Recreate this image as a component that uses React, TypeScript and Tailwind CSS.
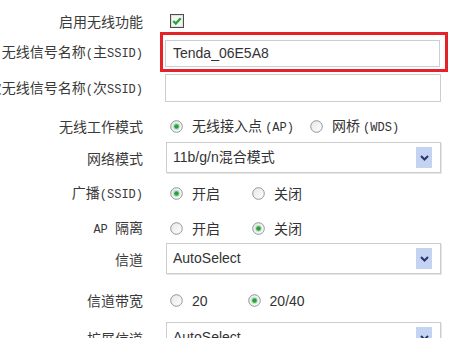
import React from "react";

const CJK = { fontFamily: '"Noto Sans CJK SC", "Liberation Sans", sans-serif' };
const SANS = { fontFamily: '"Liberation Sans", "Noto Sans CJK SC", sans-serif' };
const MONO = { fontFamily: '"Liberation Mono", monospace' };

function M({ children }: { children: React.ReactNode }) {
  return (
    <span className="text-[12px]" style={MONO}>
      {children}
    </span>
  );
}

function Label({ children }: { children: React.ReactNode }) {
  return (
    <div
      className="w-[143px] shrink-0 flex justify-end whitespace-nowrap text-[14px] leading-none text-[#3a3a3a]"
      style={CJK}
    >
      <span className="whitespace-pre">{children}</span>
    </div>
  );
}

function Radio({ on }: { on?: boolean }) {
  return (
    <svg width="13" height="13" viewBox="0 0 13 13" className="shrink-0">
      <defs>
        <linearGradient id="rg" x1="0" y1="0" x2="1" y2="1">
          <stop offset="0" stopColor="#e6e6e6" />
          <stop offset="1" stopColor="#ffffff" />
        </linearGradient>
      </defs>
      <circle cx="6.5" cy="6.5" r="5.8" fill="url(#rg)" stroke="#8f969c" strokeWidth="1" />
      {on && <circle cx="6.5" cy="6.5" r="3.4" fill="#b9e3bf" />}
      {on && <circle cx="6.5" cy="6.5" r="2.3" fill="#2c9e3e" />}
    </svg>
  );
}

function Opt({ on, children, className }: { on?: boolean; children: React.ReactNode; className?: string }) {
  return (
    <div className={"flex items-center " + (className || "")}>
      <Radio on={on} />
      <span className="ml-[9px] text-[14px] leading-none text-[#333] whitespace-pre" style={CJK}>
        {children}
      </span>
    </div>
  );
}

function Select({ value }: { value: string }) {
  return (
    <div className="ml-[23px] w-[275px] h-[31px] border border-[#cdcdcd] shadow-[1px_1px_0_#e6e6e6] bg-white flex items-center pl-[6px] pr-[8px]">
      <span className="flex-1 text-[14px] text-[#333] whitespace-nowrap" style={SANS}>
        {value}
      </span>
      <div className="w-[16px] h-[21px] bg-[#c4d3f2] flex items-center justify-center">
        <svg width="9" height="6" viewBox="0 0 9 6">
          <path d="M1 1 L4.5 4.5 L8 1" fill="none" stroke="#24386a" strokeWidth="2" />
        </svg>
      </div>
    </div>
  );
}

export default function App() {
  return (
    <div className="w-[474px] h-[338px] overflow-hidden bg-white">
      {/* Row 1 */}
      <div className="flex items-center h-[32px] pt-[10px]">
        <Label>启用无线功能</Label>
        <div className="ml-[27px]">
          <svg width="14" height="14" viewBox="0 0 14 14">
            <rect x="0.5" y="0.5" width="13" height="13" fill="#f3f5f3" stroke="#4d4d4d" />
            <rect x="1.5" y="1.5" width="11" height="11" fill="none" stroke="#dfe3df" />
            <path d="M3.3 7 L5.8 9.6 L10.7 4.3" fill="none" stroke="#24a33a" strokeWidth="2.2" />
          </svg>
        </div>
      </div>
      {/* Row 2 */}
      <div className="flex items-center h-[40px]">
        <Label>
          无线信号名称<M>(</M>主<M>SSID)</M>
        </Label>
        <div className="ml-[17px] w-[288px] h-[40px] border-[3px] border-[#e42227] pl-[2px] pr-[5px] pt-[5px] pb-[2px]">
          <div className="h-full border border-[#c5d0da] bg-white flex items-center pl-[7px] text-[14px] text-[#333]" style={SANS}>
            Tenda_06E5A8
          </div>
        </div>
      </div>
      {/* Row 3 */}
      <div className="flex items-center h-[28px] mt-[2px]">
        <Label>
          次无线信号名称<M>(</M>次<M>SSID)</M>
        </Label>
        <div className="ml-[22px] w-[276px] h-[28px] border border-[#cdcdcd] bg-white" />
      </div>
      {/* Row 4 */}
      <div className="flex items-center h-[40px] pt-[8px]">
        <Label>无线工作模式</Label>
        <Opt on className="ml-[27px]">
          无线接入点 <M>(AP)</M>
        </Opt>
        <Opt className="ml-[16px]">
          网桥 <M>(WDS)</M>
        </Opt>
      </div>
      {/* Row 5 */}
      <div className="flex items-center h-[31px]">
        <Label>网络模式</Label>
        <Select value="11b/g/n混合模式" />
      </div>
      {/* Row 6 */}
      <div className="flex items-center h-[40px]">
        <Label>
          广播<M>(SSID)</M>
        </Label>
        <Opt on className="ml-[27px]">开启</Opt>
        <Opt className="ml-[32px]">关闭</Opt>
      </div>
      {/* Row 7 */}
      <div className="flex items-center h-[30px]">
        <Label>
          <M>AP </M>隔离
        </Label>
        <Opt className="ml-[27px]">开启</Opt>
        <Opt on className="ml-[32px]">关闭</Opt>
      </div>
      {/* Row 8 */}
      <div className="flex items-center h-[31px]">
        <Label>信道</Label>
        <Select value="AutoSelect" />
      </div>
      {/* Row 9 */}
      <div className="flex items-center h-[48px] pt-[4px]">
        <Label>信道带宽</Label>
        <Opt className="ml-[27px]">
          <span style={SANS}>20</span>
        </Opt>
        <Opt on className="ml-[40px]">
          <span style={SANS}>20/40</span>
        </Opt>
      </div>
      {/* Row 10 */}
      <div className="flex items-center h-[31px]">
        <Label>扩展信道</Label>
        <Select value="AutoSelect" />
      </div>
    </div>
  );
}
